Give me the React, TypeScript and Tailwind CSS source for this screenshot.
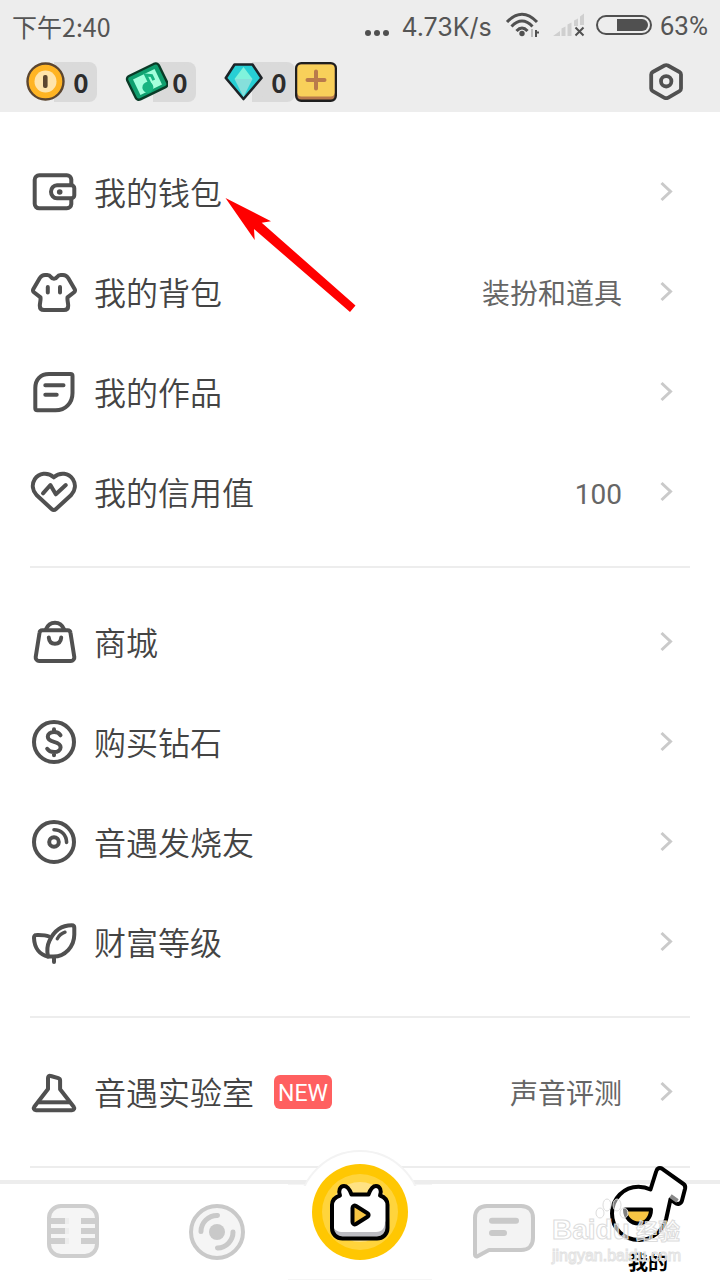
import type { ReactNode } from "react";

type MenuItem = {
  label: string;
  icon: ReactNode;
  value?: string;
  badge?: string;
};

const Stroke = ({ children }: { children: ReactNode }) => (
  <svg
    className="w-12 h-12 shrink-0"
    viewBox="0 0 48 48"
    fill="none"
    stroke="#505050"
    strokeWidth="4"
    strokeLinecap="round"
    strokeLinejoin="round"
    aria-hidden="true"
  >
    {children}
  </svg>
);

const WalletIcon = () => (
  <Stroke>
    <path d="M41.3 17V11.5a4.5 4.5 0 0 0-4.5-4.2H9.2a4.5 4.5 0 0 0-4.5 4.5v24a4.5 4.5 0 0 0 4.5 4.5h27.6a4.5 4.5 0 0 0 4.5-4.2V31" />
    <path d="M27 17.3h14.3a3 3 0 0 1 3 3v7a3 3 0 0 1-3 3H27a6 6.500 0 0 1 0-13z" />
    <circle cx="29.7" cy="24" r="2.8" fill="#505050" stroke="none" />
  </Stroke>
);

const ShirtIcon = () => (
  <Stroke>
    <path d="M24 10.8c-1.400 0-2.400-.8-3.200-2C20 7.600 18.800 7 17.300 7H15c-2.500 0-4 1.200-5.200 3L3.400 21c-.7 1.300-.5 2.300.5 3.200l6.600 5.200c.4 3-.7 5.300-.7 8.300 0 2.800 1.700 4.300 4.200 4.300h20c2.500 0 4.200-1.500 4.200-4.300 0-3-1.100-5.300-.7-8.300l6.600-5.200c1-.9 1.200-1.900.5-3.200L38.200 10C37 8.200 35.500 7 33 7h-2.300c-1.500 0-2.700.6-3.500 1.800-.8 1.200-1.800 2-3.200 2z" />
    <path d="M17.800 19v5.500M30 19v5.500" />
  </Stroke>
);

const WorksIcon = () => (
  <Stroke>
    <path d="M19 6h21.500a2 2 0 0 1 2 2v17c0 10-7 17.300-17 17.300H7.300a2 2 0 0 1-2-2V20C5.300 11.500 10.500 6 19 6z" />
    <path d="M15.300 17.200h18.200M15.300 26.700h11.400" />
  </Stroke>
);

const HeartIcon = () => (
  <Stroke>
    <path d="M23.800 9.300C17.500 3.500 8.800 5 4.800 11.200c-3.300 5.300-2.300 11.300 1.700 15.800L21.600 41c1.400 1.300 3 1.300 4.400 0l15.200-14c4-4.500 5-10.500 1.700-15.800C38.900 5 30.100 3.500 23.800 9.300z" />
    <path d="M13 25.300l7.400-8.300 5.400 9.300L35.800 17" />
  </Stroke>
);

const ShopIcon = () => (
  <Stroke>
    <path d="M12.500 12.300h25a3 3 0 0 1 3 2.700l3.800 24a3.500 3.500 0 0 1-3.500 4H9.200a3.500 3.500 0 0 1-3.500-4l3.800-24a3 3 0 0 1 3-2.700z" />
    <path d="M16 11.300c1.700-4.300 5-6.600 9-6.600s7.300 2.300 9 6.600" />
    <path d="M18.800 19.600c.4 4 2.700 6.200 6.200 6.200s5.800-2.200 6.200-6.200" />
  </Stroke>
);

const DollarIcon = () => (
  <Stroke>
    <circle cx="24" cy="24" r="20" />
    <path d="M30.500 17.300c-1.200-2.200-3.400-3.300-6.400-3.300-3.800 0-6.300 1.900-6.300 4.700 0 3.100 2.700 4.200 6.200 5.200s6.600 2.100 6.600 5.400c0 3-2.700 4.800-6.500 4.800-3.300 0-5.500-1-6.900-3.300M24 11.200v2.800M24 34.100v3.200" />
  </Stroke>
);

const DiscIcon = () => (
  <Stroke>
    <circle cx="24" cy="24" r="20" />
    <circle cx="24" cy="24" r="4.800" />
    <path d="M24 11.800c7.300 0 12.400 5 12.600 12.600" strokeWidth="3.600" />
  </Stroke>
);

const PlantIcon = () => (
  <Stroke>
    <path d="M18 38.500c-1.200-5.500-.9-10.800 1.400-15.600C24 13 31.500 7.300 41.800 7.300c1.700 0 2.500.9 2.500 2.500v6.800c0 12-9.300 22-20.800 22-2 0-3.500 0-5.500-.1z" />
    <path d="M19 18.500c-3.800-1.600-8.300-1.500-12.500-1.400-1.700 0-2.600 1-2.500 2.700.4 10.500 6 17 14 18.700M24 39v5" />
    <path d="M27.300 20.800c1.800-3.500 4.300-5.500 7.700-6.600" strokeWidth="3.400" />
  </Stroke>
);

const LabIcon = () => (
  <Stroke>
    <path d="M18 10c0-1.700 1.200-2.600 2.800-2l7.500 2.200c1.200.4 1.800 1 1.800 2.300v8.700l13.400 17.300c1.300 1.900.6 3.800-1.500 3.800H6c-2.100 0-2.800-1.900-1.500-3.800L18 21z" />
    <path d="M9 34.300h30" strokeLinecap="butt" />
  </Stroke>
);

const sections: MenuItem[][] = [
  [
    { label: "我的钱包", icon: <WalletIcon /> },
    { label: "我的背包", icon: <ShirtIcon />, value: "装扮和道具" },
    { label: "我的作品", icon: <WorksIcon /> },
    { label: "我的信用值", icon: <HeartIcon />, value: "100" },
  ],
  [
    { label: "商城", icon: <ShopIcon /> },
    { label: "购买钻石", icon: <DollarIcon /> },
    { label: "音遇发烧友", icon: <DiscIcon /> },
    { label: "财富等级", icon: <PlantIcon /> },
  ],
  [{ label: "音遇实验室", icon: <LabIcon />, value: "声音评测", badge: "NEW" }],
];

const StatusBar = () => (
  <div className="h-[52px] px-3 flex items-center justify-between leading-8 text-[#555]">
    <span className="text-[25px]">下午2:40</span>
    <div className="flex items-center">
      <svg className="w-6 h-8 mr-3" viewBox="0 0 24 32" fill="#505050" aria-hidden="true">
        <circle cx="3" cy="23" r="3" />
        <circle cx="12" cy="23" r="3" />
        <circle cx="21" cy="23" r="3" />
      </svg>
      <span className="pt-0.5 text-[25px] mr-[13px] font-['Inter','Liberation_Sans',sans-serif]">4.73K/s</span>
      <svg className="w-9 h-8 mr-3" viewBox="0 0 36 32" fill="none" stroke="#505050" strokeWidth="3" aria-hidden="true">
        <path d="M2 12Q17 -3.500 32 12M6.500 16.500Q17 5.500 27.500 16.500M11.500 21Q17 15 22.500 21" />
        <circle cx="17" cy="23.500" r="2.700" fill="#505050" stroke="none" />
        <path d="M27 19v8" stroke="#bbb" strokeWidth="2" />
        <path d="M31 20v7M31 22.500h3" strokeWidth="2" />
      </svg>
      <svg className="w-8 h-8 mr-[11px]" viewBox="0 0 32 32" fill="#cfcfcf" aria-hidden="true">
        <path d="M0 26l7-5v5zM8.500 18.500l4-2V26h-4zM14.500 14.500l4-2V26h-4zM21 10.500l4-2V16h-4zM27 6.500l4-3V15h-4z" />
        <path d="M22.500 17.500l8 8M30.500 17.500l-8 8" stroke="#505050" strokeWidth="2" />
      </svg>
      <svg className="w-14 h-8 mr-2" viewBox="0 0 56 32" fill="none" aria-hidden="true">
        <rect x="1" y="6" width="54" height="18" rx="9" stroke="#505050" strokeWidth="2" />
        <path d="M21 9h25a6 6 0 0 1 0 12H21z" fill="#505050" />
      </svg>
      <span className="text-[26px] font-['Roboto',sans-serif]">63%</span>
    </div>
  </div>
);

const Balance = ({ icon, action }: { icon: ReactNode; action?: ReactNode }) => (
  <div className="flex items-center h-10">
    <div className="h-10 flex items-center rounded-lg bg-linear-to-r from-transparent from-40% to-[#dadada] to-40% pr-1">
      {icon}
      <span className="w-6 text-center text-[26px] leading-10 font-bold text-[#2c2c2c]">0</span>
    </div>
    {action}
  </div>
);

const CoinIcon = () => (
  <svg className="w-[43px] h-10 shrink-0" viewBox="0 0 43 40" aria-hidden="true">
    <circle cx="19.500" cy="19.500" r="18" fill="#ffb423" stroke="#5c4630" strokeWidth="2.400" />
    <circle cx="19.500" cy="19.500" r="11" fill="#ffe4ab" />
    <rect x="17" y="13" width="4.600" height="13" rx="2" fill="#5c4630" />
  </svg>
);

const NoteIcon = () => (
  <svg className="w-[43px] h-10 shrink-0" viewBox="0 0 43 40" aria-hidden="true">
    <g transform="rotate(-26 22.500 20)">
      <rect x="5" y="6.500" width="35" height="26" rx="3.500" fill="#0f9f6e" stroke="#0a3b27" strokeWidth="2.400" />
      <rect x="10.500" y="11.500" width="24" height="17" fill="#a4ffdc" />
      <circle cx="20.500" cy="25" r="5.500" fill="#17b480" />
      <path d="M24 25V13l5 3v5" fill="none" stroke="#17b480" strokeWidth="3" />
    </g>
  </svg>
);

const GemIcon = () => (
  <svg className="w-[43px] h-10 shrink-0" viewBox="0 0 43 40" aria-hidden="true">
    <path d="M10.500 2.500h18L37.500 16 19.500 37 1.800 16z" fill="#27cfd4" stroke="#1d2327" strokeWidth="2.600" strokeLinejoin="round" />
    <path d="M19.500 5l9 12h-18z" fill="#80f3dc" />
    <path d="M10.500 17h18l-9 18z" fill="#86dfdb" />
  </svg>
);

const Header = () => (
  <header className="bg-[#ededed] text-[#505050]">
    <StatusBar />
    <div className="h-[60px] pl-[26px] pr-[34px] flex items-center justify-between">
      <div className="flex items-center gap-7">
        <Balance icon={<CoinIcon />} />
        <Balance icon={<NoteIcon />} />
        <Balance
          icon={<GemIcon />}
          action={
            <button type="button" aria-label="充值" className="w-[42px] h-10">
              <svg className="w-full h-full" viewBox="0 0 42 40" aria-hidden="true">
                <rect x="1.200" y="1.200" width="39.600" height="37.600" rx="5" fill="#b97a4c" stroke="#1f1f1f" strokeWidth="2.400" />
                <rect x="2.400" y="2.400" width="37.200" height="32" rx="4" fill="#f8d05a" />
                <path d="M21 9.500v17M12.500 18h17" stroke="#b97a4c" strokeWidth="4" strokeLinecap="round" />
              </svg>
            </button>
          }
        />
      </div>
      <button type="button" aria-label="设置" className="w-10 h-10">
        <svg className="w-full h-full" viewBox="0 0 40 40" fill="none" stroke="#505050" strokeWidth="3.800" strokeLinejoin="round" aria-hidden="true">
          <path d="M18.500 3.500a4 4 0 0 1 3.400 0L33.500 10a3 3 0 0 1 1.500 2.500v14a3 3 0 0 1-1.500 2.600L21.900 35.800a4 4 0 0 1-3.400 0L6.700 29.100a3 3 0 0 1-1.500-2.600v-14A3 3 0 0 1 6.700 10z" />
          <circle cx="20.200" cy="19.300" r="5.200" />
        </svg>
      </button>
    </div>
  </header>
);

const MenuRow = ({ item }: { item: MenuItem }) => (
  <a href="#" className="h-[100px] flex items-center">
    {item.icon}
    <span className="ml-4 pb-0.5 text-[32px] leading-10 font-[350] text-[#444]">{item.label}</span>
    {item.badge && (
      <span className="ml-5 h-[34px] px-1 rounded-md bg-[#ff6060] text-white text-[23px] leading-[37px] font-['Roboto',sans-serif]">
        {item.badge}
      </span>
    )}
    <span className="ml-auto mr-5 pt-1.5 text-[28px] leading-10 text-[#666] font-['Roboto','Noto_Sans_CJK_SC',sans-serif]">
      {item.value}
    </span>
    <svg className="w-12 h-6 shrink-0" viewBox="0 0 48 24" fill="none" stroke="#cacaca" strokeWidth="3" aria-hidden="true">
      <path d="M19.500 3l9 8.500-9 8.500" />
    </svg>
  </a>
);

const PointerArrow = () => (
  <svg className="absolute left-[225px] top-[85px] w-[132px] h-[116px] pointer-events-none" viewBox="0 0 132 116" fill="#f00" aria-hidden="true">
    <path d="M0.500 1L46 24.300l-9.300 1.400L130.500 108.500l-5.500 6.500L29 32l.7 11z" />
  </svg>
);

const MicTab = () => (
  <svg className="w-16 h-16" viewBox="0 0 64 64" aria-hidden="true">
    <rect x="9" y="6" width="48" height="50" rx="12" fill="#f5f5f5" stroke="#cecece" strokeWidth="4" />
    <path d="M9 21h16M9 31h16M9 41h16M41 21h16M41 31h16M41 41h16" stroke="#cecece" strokeWidth="6" />
    <path d="M25 21h4M25 31h4M25 41h4" stroke="#ededed" strokeWidth="6" />
  </svg>
);

const RecordTab = () => (
  <svg className="w-16 h-16" viewBox="0 0 64 64" fill="none" stroke="#c9c9c9" aria-hidden="true">
    <circle cx="33" cy="32" r="26" fill="#f5f5f5" strokeWidth="4" />
    <circle cx="33" cy="32" r="8" fill="#c9c9c9" stroke="none" />
    <path d="M33.500 15.500A16 16 0 0 0 17 31.500M33.500 48A16 16 0 0 0 49 32" strokeWidth="5" strokeLinecap="round" />
  </svg>
);

const ChatTab = () => (
  <svg className="w-16 h-16" viewBox="0 0 64 64" fill="none" stroke="#c9c9c9" strokeLinecap="round" strokeLinejoin="round" aria-hidden="true">
    <path d="M15 6h34c7.500 0 12 4.500 12 12v20c0 7.500-4.500 12-12 12H17L5.500 56.200C4 57 3 56 3 54.500V18C3 10.500 7.500 6 15 6z" fill="#f3f3f3" strokeWidth="4" />
    <path d="M20 20.700h24M20 33h12" strokeWidth="6" />
  </svg>
);

const PlayTab = () => (
  <svg className="w-24 h-24" viewBox="0 0 96 96" aria-hidden="true">
    <circle cx="48" cy="48" r="48" fill="#ffc702" />
    <circle cx="48" cy="48" r="38" fill="#ffd43c" />
    <circle cx="48" cy="48" r="30" fill="#ffe283" />
    <path
      d="M28 31.500c-2-4.500 0-9.500 4-9.500 3.500 0 5.500 3 7.500 8.500h17c2-5.500 4-8.500 7.500-8.500 4 0 6 5 4 9.500 4.500 1.500 7.500 5 7.500 9.500v23c0 6-4.500 10.500-10.500 10.500H30.500C24.500 74.500 20 70 20 64V41c0-4.500 3.500-8 8-9.500z"
      fill="#fff"
    />
    <path d="M21 62c1 4 5 6 10 6h33c6 0 9-4 9-10l2.500-2v8c0 6-4.500 10.500-10.500 10.500H31c-6 0-10-4-10-12.500z" fill="#bdbdc2" />
    <path
      d="M28 31.500c-2-4.500 0-9.500 4-9.500 3.500 0 5.500 3 7.500 8.500h17c2-5.500 4-8.500 7.500-8.500 4 0 6 5 4 9.500 4.500 1.500 7.500 5 7.500 9.500v23c0 6-4.500 10.500-10.500 10.500H30.500C24.500 74.500 20 70 20 64V41c0-4.500 3.500-8 8-9.500z"
      fill="none"
      stroke="#000"
      strokeWidth="4"
      strokeLinejoin="round"
    />
    <path d="M40.500 44c0-2 1.800-3 3.500-2l11.500 7.200c1.500.9 1.500 2.600 0 3.500L44 60c-1.700 1-3.500 0-3.500-2z" fill="#f7c544" stroke="#000" strokeWidth="4" strokeLinejoin="round" />
  </svg>
);

const MineTab = () => (
  <svg className="absolute left-7 -top-6 w-[88px] h-[88px]" viewBox="0 0 88 88" fill="none" aria-hidden="true">
    <path
      d="M46.500 29.500L52.300 11c.8-2.800 3.500-3.800 6-2.200L79.500 24c1.700 1.200 2 2.500 1.600 4.500L78 40.500c-1 3.700-4.500 4.300-7 2.200l-4.500-3.400-4.300 19.500C59 71 48 80 35 80 20 80 8 68.500 8 53.500S20 26.800 34.500 26.800c4.500 0 8.500 1 12 2.700z"
      fill="#fff"
      stroke="#000"
      strokeWidth="4"
      strokeLinejoin="round"
    />
    <path d="M66.500 36l7 5" stroke="#888" strokeWidth="4" />
    <path d="M21 49.500h26c0 8-5 14-12.500 14S21 57.500 21 49.500z" fill="#f7c544" stroke="#000" strokeWidth="4" strokeLinejoin="round" />
  </svg>
);

const Watermark = () => (
  <div className="absolute right-10 bottom-4 w-32 text-white/60 pointer-events-none font-['Liberation_Sans','Noto_Sans_CJK_SC',sans-serif]">
    <div className="relative flex items-baseline justify-between text-[28px] leading-8 font-bold whitespace-nowrap [-webkit-text-stroke:1px_#dcdcdc]">
      <span>Baidu</span>
      <span className="text-[22px]">经验</span>
      <svg className="absolute left-[42px] -top-4 w-9 h-9" viewBox="0 0 36 36" fill="#fff" fillOpacity="0.5" stroke="#dcdcdc" aria-hidden="true">
        <ellipse cx="6" cy="15" rx="4" ry="5" />
        <ellipse cx="13" cy="7" rx="4" ry="6" />
        <ellipse cx="23" cy="7" rx="4" ry="6" />
        <ellipse cx="30" cy="15" rx="4" ry="5" />
      </svg>
    </div>
    <div className="text-[16px] leading-4 whitespace-nowrap [-webkit-text-stroke:1px_#e2e2e2]">jingyan.baidu.com</div>
  </div>
);

const TabBar = () => (
  <nav className="relative h-[100px] border-t-4 border-[#ededed] bg-white flex">
    <button type="button" aria-label="唱歌" className="flex-1 flex items-center justify-center">
      <MicTab />
    </button>
    <button type="button" aria-label="唱片" className="flex-1 flex items-center justify-center">
      <RecordTab />
    </button>
    <div className="relative flex-1 flex justify-center border-y border-[#f5f5f5]">
      <div className="absolute -top-[35px] w-[124px] h-9 overflow-hidden">
        <div className="w-[124px] h-[124px] rounded-full border-2 border-[#f3f3f3] bg-white" />
      </div>
      <button type="button" aria-label="播放" className="absolute -top-[21px]">
        <PlayTab />
      </button>
    </div>
    <button type="button" aria-label="消息" className="flex-1 flex items-center justify-center">
      <ChatTab />
    </button>
    <button type="button" className="relative flex-1 flex items-end justify-center pb-1">
      <MineTab />
      <span className="relative text-[20px] leading-7 font-bold text-black">我的</span>
    </button>
    <Watermark />
  </nav>
);

export default function App() {
  return (
    <div className="relative min-h-screen flex flex-col bg-white font-['Noto_Sans_CJK_SC',sans-serif]">
      <Header />
      <main className="relative flex-1 px-[30px] pt-[30px]">
        {sections.map((items, i) => (
          <section key={i}>
            {items.map((item) => (
              <MenuRow key={item.label} item={item} />
            ))}
            <hr className={`h-0.5 border-0 bg-[#ededed] mt-6 ${i < sections.length - 1 ? "mb-6" : "mb-0"}`} />
          </section>
        ))}
        <PointerArrow />
      </main>
      <TabBar />
    </div>
  );
}
